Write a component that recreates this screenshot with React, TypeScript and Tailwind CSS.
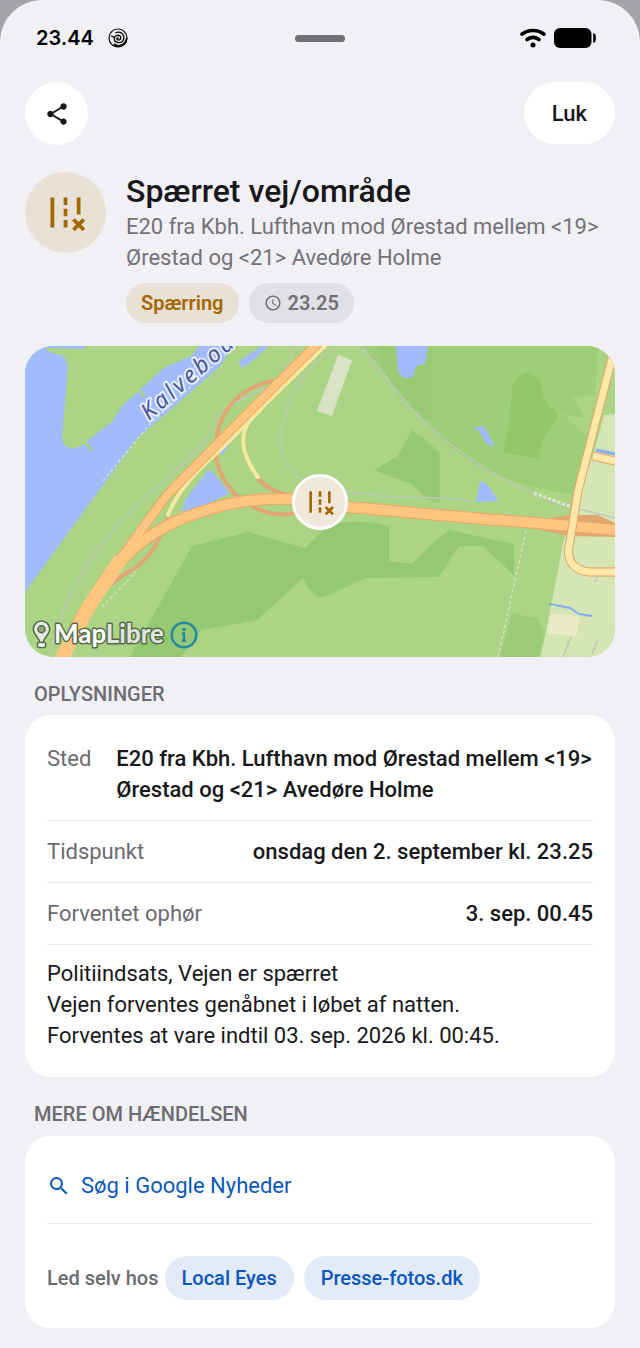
import { MdAccessTime, MdRemoveRoad, MdSearch, MdShare } from "react-icons/md"

interface DetailRowProps {
  label: string
  value: string
}

const description = [
  "Politiindsats, Vejen er spærret",
  "Vejen forventes genåbnet i løbet af natten.",
  "Forventes at vare indtil 03. sep. 2026 kl. 00:45.",
]

const photoLinks = ["Local Eyes", "Presse-fotos.dk"]

function SwirlIcon() {
  return (
    <svg viewBox="0 0 20 20" className="h-5 w-5" fill="none" stroke="black" strokeLinecap="round">
      <circle cx="10" cy="10" r="9" strokeWidth="1.2" />
      <path d="M18.500 11c-1 6-8 8.500-12 5.500" strokeWidth="1.800" />
      <path
        d="M10.200 10.300c-.4-.9-1.700-.2-1.300.8.8 2 4.300.8 3.900-1.600-.6-3.300-6.300-2.900-6.500 1-.2 5 8 5.800 9.400.6 1.200-5-3.600-8.200-8-6.500M3.400 8l3 1.300"
        strokeWidth="1.300"
      />
    </svg>
  )
}

function WifiIcon() {
  return (
    <svg viewBox="0 0 26 20" className="h-5 w-[26px]" fill="none" stroke="black" strokeWidth="3.600" strokeLinecap="round">
      <path d="M2 6.200c6.500-5 15.500-5 22 0" />
      <path d="M7 11.500c3.800-2.600 8.200-2.600 12 0" />
      <circle cx="13" cy="17" r="2.500" fill="black" stroke="none" />
    </svg>
  )
}

function BatteryIcon() {
  return (
    <svg viewBox="0 0 42 20" className="h-5 w-[42px]">
      <rect width="37.500" height="20" rx="6" />
      <path d="M39.200 5.200c1.700.3 2.600 1.300 2.600 3v3.600c0 1.700-.9 2.700-2.600 3z" />
    </svg>
  )
}

function StatusBar() {
  return (
    <div className="grid h-[76px] grid-cols-3 items-center px-9">
      <div className="flex items-center gap-[14px]">
        <span className="font-[Inter] text-[20px] font-semibold text-black">23.44</span>
        <SwirlIcon />
      </div>
      <div className="h-[7px] w-[50px] justify-self-center rounded-full bg-[#717075]" />
      <div className="flex items-center justify-end gap-2 pr-2">
        <WifiIcon />
        <BatteryIcon />
      </div>
    </div>
  )
}

function MapDrawing() {
  return (
    <svg viewBox="25 346 590 311" preserveAspectRatio="xMidYMid slice" className="h-full w-full">
      <rect x="25" y="346" width="590" height="311" fill="#abd585" />

      {/* parkland */}
      <path d="M360 346h239l-4 48-22 4 12 20-22-4 26 24-13 58-30-6c-60-12-88-36-112-58-18-16-40-52-74-86z" fill="#9fce78" />
      <path d="M380 346h52v76l-34-25-18-35z" fill="#95c76f" opacity=".5" />
      <path d="M513 383l12-11 16 8 2 18 16 18-16 24-4 18-36-5 6-28z" fill="#93c66d" />
      <path d="M420 434l20 18v50h-8l-12-22z" fill="#95c872" opacity=".6" />
      <path d="M374 470l24-14 14-26 27 23v47h-12l-14-15z" fill="#95c872" />
      <path d="M130 657l62-111 56-14 57 16 20-20c15-8 40-8 64-2v35l23 3 20-20 17-14 65 14v31l-31-29h-24l-20 31-73 1-37 17c-10 6-18 0-26-17l-46 42-56 10-20 27z" fill="#95c872" />
      <path d="M500 657l12-44 26 6 6 14-5 24z" fill="#95c872" opacity=".7" />

      {/* built-up area */}
      <path d="M604 415l11-1v243h-74l23-117 9-38 20-46z" fill="#d5e5b4" />
      <path d="M550 614l30 2-4 20-29-3z" fill="#ebecc7" />
      <path d="M338 355l14 5-20 56-15-5z" fill="#d9e2c5" />

      {/* water */}
      <path d="M25 346h20l4 6 15 4 4 10-6 72c2 12 14 14 24 4l26-20 11-17 17-15 24-22 27-12 9-10h35l-17 22-80 70-46 62-67 92z" fill="#a0bcff" />
      <path d="M48 346h37v3l-37-1z" fill="#a0bcff" />
      <path d="M239 361l23-15h7l-18 16-9 6z" fill="#a0bcff" />
      <path d="M185 500l24-31 8 8 13 16-20 10-28 10z" fill="#a0bcff" />
      <path d="M220 448l15-13-9 15-6 6z" fill="#a0bcff" />
      <path d="M396 346h32l-3 18-9 2-3 11-9 1-6-6z" fill="#a0bcff" />
      <path d="M473 428l11-2 9 16 1 5-8-4-7-12z" fill="#a0bcff" />
      <path d="M480 481c8 1 12 10 18 20l-22 1z" fill="#a0bcff" />
      <path d="M596 450l19 4" stroke="#85acf2" strokeWidth="3" />
      <path d="M549 604l11 2 10 2 9 6 13 2" fill="none" stroke="#85acf2" strokeWidth="2" />
      <path d="M136 388l9 8M83 441l9 9" stroke="#abd585" strokeWidth="3" />

      {/* paths */}
      <g fill="none" stroke="#bfc8b7" strokeWidth="1.500">
        <path d="M50 657c12-70 60-130 98-162 35-30 50-40 70-78 12-18 30-18 52-32 10-7 19-20 24-39" />
        <path d="M334 348c-30 20-40 40-48 65-14 36 0 56 20 70M348 491c40 10 90 3 125 11" />
        <path d="M363 348c20 24 40 58 80 90 30 26 70 48 112 65l60 15" />
        <path d="M563 657l8-20M592 654l6-14M595 582l4-8" stroke="#bdc4bd" />
      </g>
      <path d="M534 493l38 14" stroke="#e1e8d1" strokeWidth="3" strokeDasharray="3 2" />
      <path d="M526 531l-28 126M564 540l-11 70-12 47M102 607l34-35M235 346l-85 78-48 58" fill="none" stroke="#d5e8b4" strokeWidth="1.500" strokeDasharray="3 3" />

      {/* slip roads */}
      <g fill="none" strokeLinecap="round">
        <path d="M167 518c-8 24-14 36-32 50-16 10-26 15-35 28" stroke="#e0a678" strokeWidth="4" />
        <path d="M272 381c-44 10-55 42-56 64-2 32 20 58 50 67 10 3 20 3 29 1" stroke="#e3a574" strokeWidth="4" />
        <path d="M258 479c10 10 20 14 38 18" stroke="#e3a574" strokeWidth="4" />
        <path d="M258 477c-18-24-20-46-3-63l4-4 69-67" stroke="#f8e8a0" strokeWidth="4" />
        <path d="M168 515c10-24 24-40 54-67l38-38" stroke="#f8e8a0" strokeWidth="4" />
      </g>

      {/* motorway */}
      <g fill="none" strokeLinejoin="round">
        <path d="M510 524l60-9h28l17 8v14l-45-1z" fill="#e0a870" />
        <g stroke="#eda766">
          <path d="M61 662c11-25 13-36 28-57l34-50c15-20 27-37 41-56 17-20 36-36 56-58l98-98" strokeWidth="10" />
          <path d="M61 662c11-25 13-36 28-57 12-20 24-39 38-50 20-20 50-37 80-45 26-9 55-12 86-11l55 8c60 5 130 12 190 16l77 7" strokeWidth="12" />
        </g>
        <g stroke="#ffc581">
          <path d="M61 662c11-25 13-36 28-57l34-50c15-20 27-37 41-56 17-20 36-36 56-58l98-98" strokeWidth="8" />
          <path d="M61 662c11-25 13-36 28-57 12-20 24-39 38-50 20-20 50-37 80-45 26-9 55-12 86-11l55 8c60 5 130 12 190 16l77 7" strokeWidth="10" />
          <path d="M60 662l29-56 32-47" strokeWidth="14" />
        </g>
      </g>

      {/* local roads */}
      <g fill="none">
        <path d="M593 456l22 5M612 358l-34 133-8 50c-5 20 4 30 20 31h25" stroke="#e6a06d" strokeWidth="9" />
        <path d="M593 456l22 5M612 358l-34 133-8 50c-5 20 4 30 20 31h25" stroke="#ffe8a8" strokeWidth="7" />
      </g>

      <path id="strait" d="M149 421l110-96" fill="none" />
      <text fontFamily="Noto Sans" fontSize="23" fontStyle="italic" letterSpacing="3" fill="#49589a" stroke="#e6edfc" strokeWidth="4" strokeLinejoin="round" paintOrder="stroke">
        <textPath href="#strait">Kalvebod</textPath>
      </text>
    </svg>
  )
}

function MapLibreMark() {
  return (
    <div className="absolute bottom-1 left-[7px] flex items-center">
      <svg viewBox="0 0 20 30" className="h-[30px] w-5" stroke="#586b4a" strokeWidth="1.500">
        <path d="M9.500 1a8.200 8.200 0 0 0-8.200 8.200c0 5.300 5.200 7.300 6.700 13.300h3c1.500-6 6.700-8 6.700-13.300A8.200 8.200 0 0 0 9.500 1z" fill="#e4e9e8" />
        <circle cx="9.500" cy="9.200" r="3.500" fill="#91ab78" />
        <rect x="5.500" y="22.500" width="8" height="5" rx="1" fill="white" />
      </svg>
      <svg viewBox="0 0 117 36" className="h-9 w-[117px]">
        <text x="2" y="26" fontFamily="Lato" fontSize="26" fontWeight="700" fill="white" stroke="#586b4a" strokeWidth="3" strokeLinejoin="round" paintOrder="stroke">
          Map<tspan fill="#e0e7e2">Libre</tspan>
        </text>
      </svg>
      <button aria-label="Kortinformation">
        <svg viewBox="0 0 28 28" className="ml-px h-7 w-7" fill="none" stroke="#2389a5" strokeWidth="2.500">
          <circle cx="14" cy="14" r="12.300" />
          <path d="M12 12.500h2v8M12 19.800h4" strokeWidth="2.400" />
          <circle cx="14" cy="8.500" r="1.800" fill="#2389a5" stroke="none" />
        </svg>
      </button>
    </div>
  )
}

function DetailRow({ label, value }: DetailRowProps) {
  return (
    <div className="flex justify-between gap-[25px] border-b border-[#ebebee] py-[15px]">
      <dt className="shrink-0 text-[#6b6a70]">{label}</dt>
      <dd className="font-medium">{value}</dd>
    </div>
  )
}

export default function App() {
  return (
    <div className="bg-[#a4a3a9] font-[Roboto,sans-serif] text-[#18181b]">
      <main className="min-h-screen rounded-t-[42px] bg-[#f1f0f5] pb-5">
        <StatusBar />

        <div className="px-[25px]">
          <div className="flex items-start justify-between pt-1.5">
            <button aria-label="Del" className="flex size-[63px] items-center justify-center rounded-full bg-white">
              <MdShare className="size-[26px]" />
            </button>
            <button className="h-[62px] rounded-full bg-white px-7 text-[22px] font-medium">Luk</button>
          </div>

          <header className="mt-[27px] flex gap-5">
            <div className="flex size-[81px] shrink-0 items-center justify-center rounded-full bg-[#e8e1d5] text-[#a56700]">
              <MdRemoveRoad className="size-[45px]" />
            </div>
            <div className="min-w-0">
              <h1 className="text-[32px] leading-[39px] font-medium">Spærret vej/område</h1>
              <p className="text-[22px] leading-[31px] text-[#737278]">
                E20 fra Kbh. Lufthavn mod Ørestad mellem &lt;19&gt; Ørestad og &lt;21&gt; Avedøre Holme
              </p>
              <div className="mt-[10px] flex gap-[10px] text-[20px] font-semibold">
                <span className="flex h-10 items-center rounded-full bg-[#e8e1d5] px-[15px] text-[#a56700]">Spærring</span>
                <span className="flex h-10 items-center gap-1.5 rounded-full bg-[#e1e0e5] px-[15px] text-[#717076]">
                  <MdAccessTime className="size-[18px]" />
                  23.25
                </span>
              </div>
            </div>
          </header>

          <div className="relative mt-[23px] h-[311px] overflow-hidden rounded-[28px]">
            <MapDrawing />
            <div className="absolute inset-0 flex items-center justify-center">
              <div className="flex size-14 items-center justify-center rounded-full border-3 border-white bg-[#f1e8dc] text-[#a56700]">
                <MdRemoveRoad className="size-8" />
              </div>
            </div>
            <MapLibreMark />
          </div>

          <section>
            <h2 className="mt-[23px] px-[9px] text-[20px] leading-7 font-medium text-[#6d6c72]">OPLYSNINGER</h2>
            <div className="mt-[7px] rounded-[26px] bg-white px-[22px] pt-[13px] pb-[26px] text-[22px] leading-[31px]">
              <dl>
                <DetailRow label="Sted" value="E20 fra Kbh. Lufthavn mod Ørestad mellem <19> Ørestad og <21> Avedøre Holme" />
                <DetailRow label="Tidspunkt" value="onsdag den 2. september kl. 23.25" />
                <DetailRow label="Forventet ophør" value="3. sep. 00.45" />
              </dl>
              <div className="pt-[13px]">
                {description.map((line) => (
                  <p key={line}>{line}</p>
                ))}
              </div>
            </div>
          </section>

          <section>
            <h2 className="mt-[23px] px-[9px] text-[20px] leading-7 font-medium text-[#6d6c72]">MERE OM HÆNDELSEN</h2>
            <div className="mt-2 rounded-[26px] bg-white px-[22px] pb-7">
              <a href="#nyheder" className="flex h-[88px] items-center gap-[10px] border-b border-[#ebebee] pt-3 text-[22px] text-[#0b57bd]">
                <MdSearch className="size-6" />
                Søg i Google Nyheder
              </a>
              <div className="flex flex-wrap items-center gap-1.5 pt-8 text-[20px] font-medium">
                <span className="text-[#6b6a70]">Led selv hos</span>
                <div className="flex gap-[10px]">
                  {photoLinks.map((name) => (
                    <a key={name} href="#fotos" className="flex h-11 items-center rounded-full bg-[#e2ebf7] px-[17px] text-[#0b57bd]">
                      {name}
                    </a>
                  ))}
                </div>
              </div>
            </div>
          </section>
        </div>
      </main>
    </div>
  )
}
